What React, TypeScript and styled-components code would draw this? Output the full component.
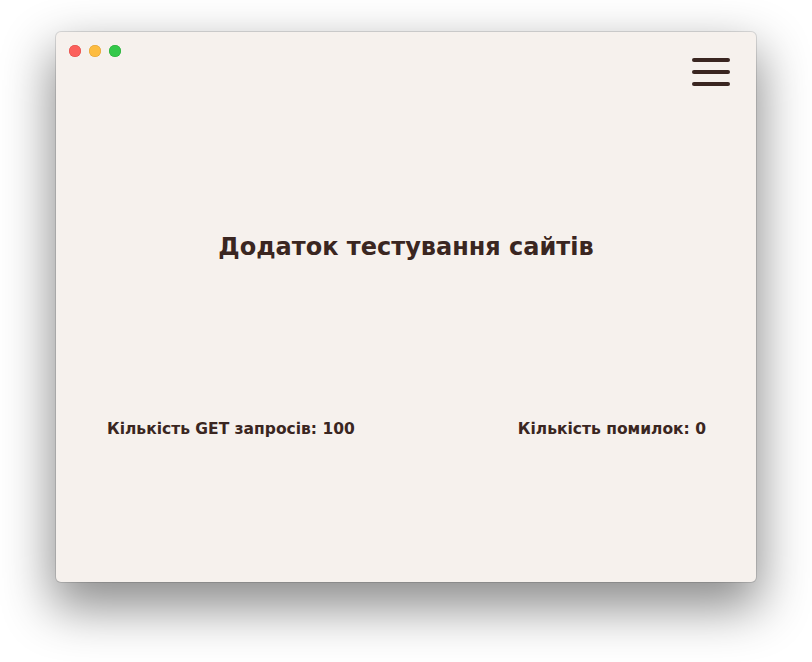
import React from "react";
import styled, { createGlobalStyle } from "styled-components";

const Global = createGlobalStyle`
  html, body { margin: 0; padding: 0; background: #ffffff; }
  body { font-family: "DejaVu Sans", "Liberation Sans", Arial, sans-serif; }
`;

const Stage = styled.div`
  width: 812px;
  height: 662px;
  padding: 32px 0 0 56px;
  box-sizing: border-box;
  overflow: hidden;
`;

const Window = styled.div`
  width: 700px;
  height: 550px;
  box-sizing: border-box;
  background: #f6f1ed;
  border-radius: 5px;
  box-shadow: 0 22px 50px 4px rgba(0, 0, 0, 0.45), 0 0 0 1px rgba(0, 0, 0, 0.12);
  display: flex;
  flex-direction: column;
  color: #3a2621;
`;

const TitleBar = styled.div`
  display: flex;
  justify-content: space-between;
  align-items: flex-start;
  padding: 13px 26px 0 13px;
  height: 60px;
  box-sizing: border-box;
`;

const Lights = styled.div`
  display: flex;
  gap: 8px;
`;

const Light = styled.span<{ $c: string; $b: string }>`
  width: 12px;
  height: 12px;
  border-radius: 50%;
  background: ${(p) => p.$c};
  box-shadow: inset 0 0 0 0.5px ${(p) => p.$b};
`;

const Burger = styled.button`
  margin-top: 13px;
  padding: 0;
  border: 0;
  background: transparent;
  display: flex;
  flex-direction: column;
  gap: 8px;
  cursor: pointer;
`;

const BurgerLine = styled.span`
  display: block;
  width: 38px;
  height: 4px;
  border-radius: 2px;
  background: #3a2621;
`;

const Title = styled.h1`
  margin: 141px 0 0;
  text-align: center;
  font-size: 24px;
  font-weight: 700;
  line-height: 28px;
`;

const Stats = styled.div`
  display: flex;
  justify-content: space-between;
  padding: 0 50px 0 51px;
  margin-top: 158px;
  font-size: 15.5px;
  font-weight: 700;
  line-height: 20px;
`;

const Stat = styled.span``;

export default function App() {
  return (
    <>
      <Global />
      <Stage>
        <Window>
          <TitleBar>
            <Lights>
              <Light $c="#fc605c" $b="#de4a45" />
              <Light $c="#fdbc40" $b="#de9f34" />
              <Light $c="#34c84a" $b="#27aa35" />
            </Lights>
            <Burger aria-label="menu">
              <BurgerLine />
              <BurgerLine />
              <BurgerLine />
            </Burger>
          </TitleBar>
          <Title>Додаток тестування сайтів</Title>
          <Stats>
            <Stat>Кількість GET запросів: 100</Stat>
            <Stat>Кількість помилок: 0</Stat>
          </Stats>
        </Window>
      </Stage>
    </>
  );
}
